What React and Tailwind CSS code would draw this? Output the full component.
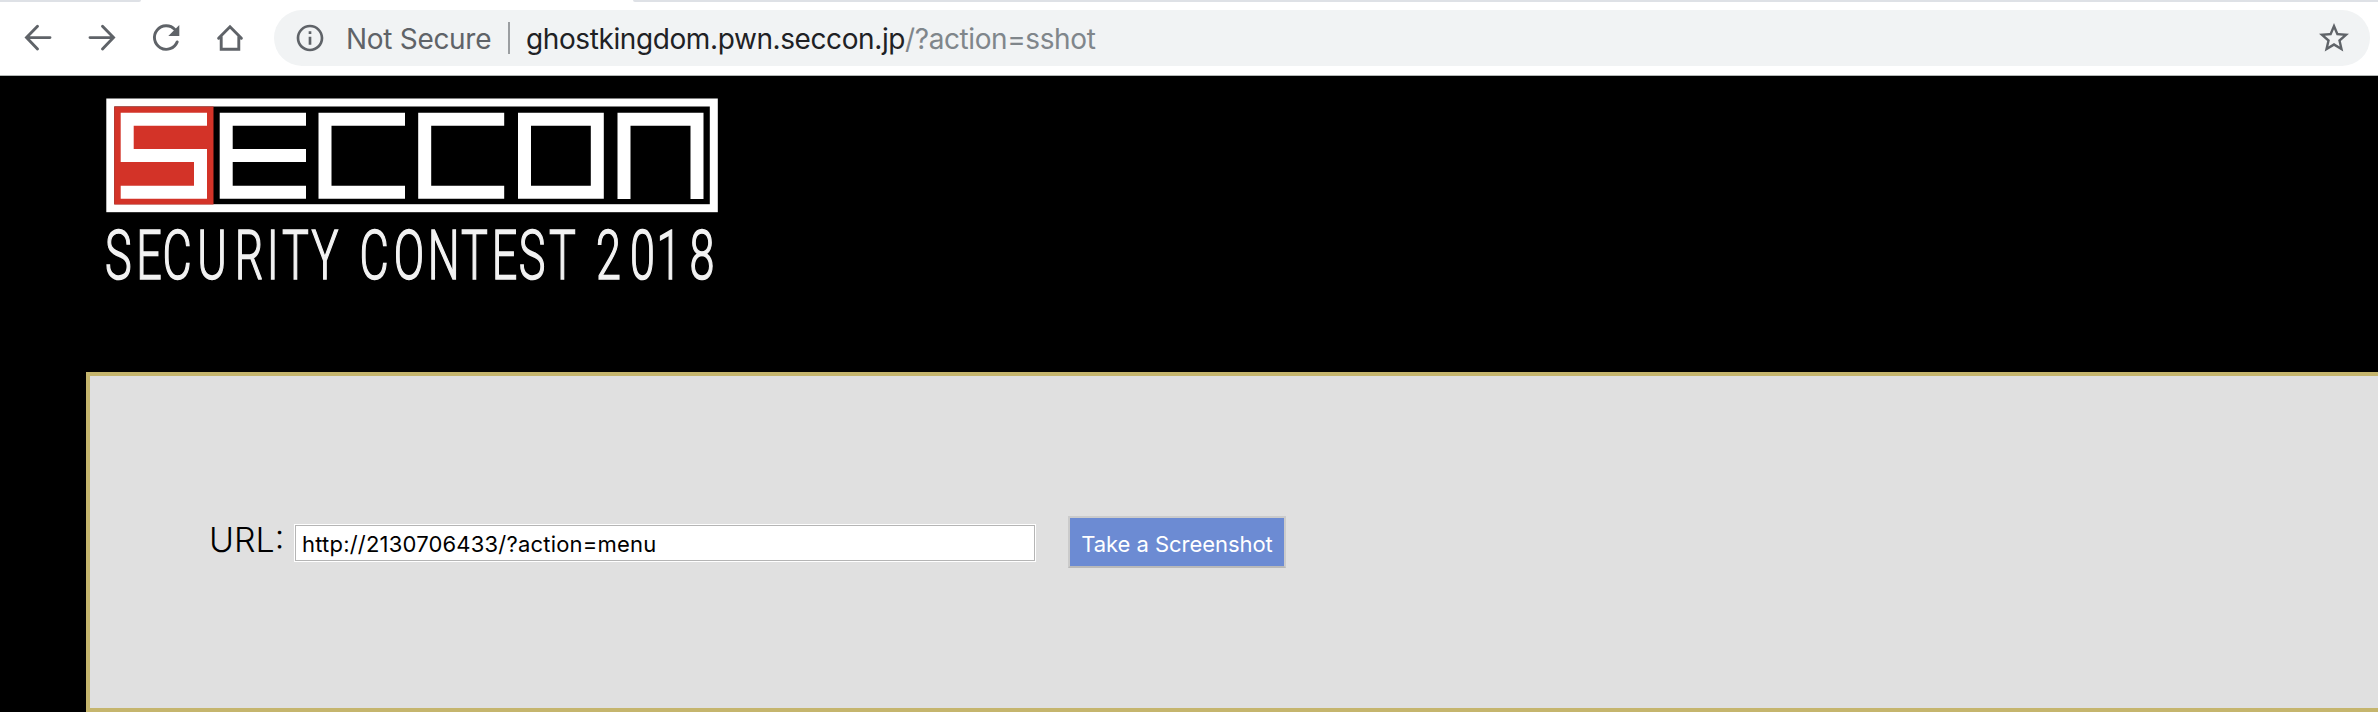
import React from "react";

const ICON = "size-8 shrink-0 text-[#5f6368]";

const TAGLINE = [
  ["S", 118.2], ["E", 149], ["C", 177], ["U", 212], ["R", 249], ["I", 272.8], ["T", 295.3], ["Y", 325],
  ["C", 374], ["O", 409], ["N", 443.7], ["T", 474.5], ["E", 504.5], ["S", 532], ["T", 562.5],
  ["2", 608.5], ["0", 642.5], ["1", 669], ["8", 702],
];

function Toolbar() {
  return (
    <header className="flex h-[76px] shrink-0 flex-col border-b border-[#b3b8b6] bg-white">
      <div className="flex h-0.5 justify-between">
        <div className="w-[141px] rounded-br-[4px] bg-[#dee1e6]" />
        <div className="w-[1745px] rounded-bl-[4px] bg-[#dee1e6]" />
      </div>
      <div className="flex items-center pt-2 pr-2 pl-[22px]">
        <svg viewBox="0 0 32 32" className={ICON} fill="none" stroke="currentColor" strokeWidth="2.9" strokeLinecap="round">
          <path d="M28 15.6H4.800M15.500 4.200L4.500 15.600L15.500 27" strokeLinejoin="miter" />
        </svg>
        <svg viewBox="0 0 32 32" className={ICON + " ml-8"} fill="none" stroke="currentColor" strokeWidth="2.9" strokeLinecap="round">
          <path d="M4 15.600H27.200M16.500 4.200L27.500 15.600L16.500 27" strokeLinejoin="miter" />
        </svg>
        <svg viewBox="0 0 32 32" className={ICON + " ml-8"} fill="none">
          <path d="M27.200 19.900A11.800 11.800 0 1 1 25 7.600" stroke="currentColor" strokeWidth="2.900" strokeLinecap="round" />
          <path d="M29.300 3V14H18.300Z" fill="currentColor" />
        </svg>
        <svg viewBox="0 0 32 32" className={ICON + " ml-8"} fill="none" stroke="currentColor" strokeWidth="2.900" strokeLinecap="round" strokeLinejoin="miter">
          <path d="M4.600 16.200L16 4.800L27.400 16.200M7.200 14.500V27.300H24.800V14.500" />
        </svg>
        <div className="ml-7 flex h-14 grow items-center rounded-full bg-[#f1f3f4] pr-[18px] pl-[20px]">
          <svg viewBox="0 0 24 24" className={ICON} fill="currentColor">
            <path d="M11 7h2v2h-2zm0 4h2v6h-2zm1-9C6.480 2 2 6.480 2 12s4.480 10 10 10 10-4.480 10-10S17.520 2 12 2zm0 18c-4.410 0-8-3.590-8-8s3.590-8 8-8 8 3.590 8 8-3.590 8-8 8z" />
          </svg>
          <span className="ml-5 w-[162px] pt-px whitespace-nowrap font-['Inter',sans-serif] text-[28px] tracking-[-0.3px] text-[#5f6368]">Not Secure</span>
          <span className="h-8 w-0.5 bg-[#9b9ea1]" />
          <span className="ml-4 pt-px whitespace-nowrap font-['Inter',sans-serif] text-[28px] tracking-[-0.4px] text-[#202124]">
            ghostkingdom.pwn.seccon.jp<span className="text-[#80868b]">/?action=sshot</span>
          </span>
          <svg viewBox="0 0 24 24" className="ml-auto size-9 shrink-0 text-[#5f6368]" fill="currentColor">
            <path d="M22 9.240l-7.190-.62L12 2 9.190 8.630 2 9.240l5.460 4.730L5.820 21 12 17.270 18.180 21l-1.630-7.030L22 9.240zM12 15.400l-3.760 2.270 1-4.280-3.320-2.880 4.380-.38L12 6.100l1.710 4.040 4.380.38-3.320 2.880 1 4.280L12 15.400z" />
          </svg>
        </div>
      </div>
    </header>
  );
}

function Logo() {
  return (
    <svg viewBox="96 88 632 208" className="h-[208px] w-[632px] shrink-0" role="img">
      <rect x="110.300" y="102.500" width="603.500" height="105.700" fill="none" stroke="#fff" strokeWidth="8" />
      <rect x="114.200" y="106.500" width="99.300" height="98" fill="#d33328" />
      <g fill="none" stroke="#fff" strokeWidth="13">
        <path d="M207 119.200H127.200V155.500H200.500V192.200H120.700" />
        <path d="M306 119.200H226.200V192.200H306M226.200 155.500H306" />
        <path d="M405 119.200H325V192.200H405" />
        <path d="M504.200 119.200H424.700V192.200H504.200" />
        <path d="M524.500 119.200H597.300V192.200H524.500Z" />
        <path d="M624 199V119.200H697V199" />
      </g>
      <g fill="#f2f2f2" stroke="#f2f2f2" strokeWidth="1.500" textAnchor="middle" className="font-['Roboto',sans-serif] text-[68px] font-light">
        {TAGLINE.map(([letter, x]) => (
          <text key={x} transform={`translate(${x} 279.200) scale(0.660 1)`}>{letter}</text>
        ))}
      </g>
    </svg>
  );
}

export default function App() {
  return (
    <div className="flex h-[712px] w-full flex-col overflow-hidden bg-black">
      <Toolbar />
      <div className="flex grow flex-col pl-[86px]">
        <div className="flex h-[296px] pt-3 pl-[10px]">
          <Logo />
        </div>
        <main className="flex h-[340px] items-start border-4 border-r-0 border-[#c5b56d] bg-[#e0e0e0] pt-[140px] pl-[119px] font-['Inter',sans-serif]">
          <label htmlFor="url" className="mt-[3px] w-[86px] text-[34px] leading-[42px] font-light tracking-[0px] text-black">URL:</label>
          <input
            id="url"
            defaultValue="http://2130706433/?action=menu"
            className="mt-[9px] h-[36px] w-[740px] border border-[#b5b5b5] bg-white pt-px pl-[6px] text-[22px] tracking-[0.2px] text-black ring-1 ring-white outline-none"
            spellCheck={false}
          />
          <button className="ml-[33px] h-[52px] w-[218px] border-2 border-[#cbcbcb] border-b-[#b9b9b9] bg-[#6c8bd3] pt-1 text-[22px] tracking-[-0.05px] whitespace-nowrap text-white">
            Take a Screenshot
          </button>
        </main>
      </div>
    </div>
  );
}
